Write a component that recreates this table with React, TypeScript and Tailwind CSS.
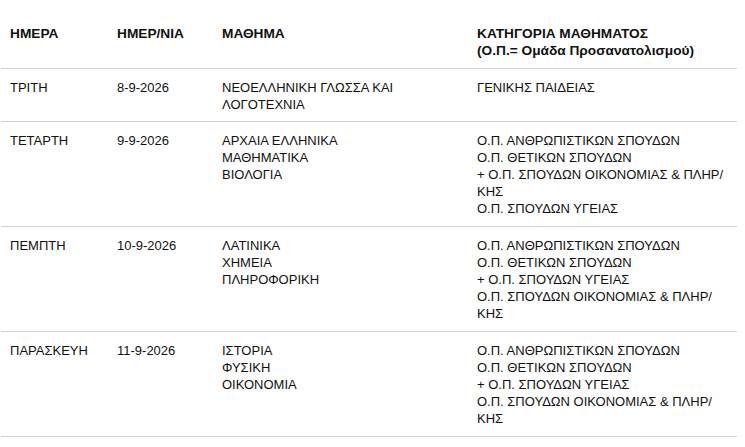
import React from "react";

type Row = { day: string; date: string; subjects: string[]; cats: string[] };

const rows: Row[] = [
  { day: "ΤΡΙΤΗ", date: "8-9-2026", subjects: ["ΝΕΟΕΛΛΗΝΙΚΗ ΓΛΩΣΣΑ ΚΑΙ", "ΛΟΓΟΤΕΧΝΙΑ"], cats: ["ΓΕΝΙΚΗΣ ΠΑΙΔΕΙΑΣ"] },
  {
    day: "ΤΕΤΑΡΤΗ",
    date: "9-9-2026",
    subjects: ["ΑΡΧΑΙΑ ΕΛΛΗΝΙΚΑ", "ΜΑΘΗΜΑΤΙΚΑ", "ΒΙΟΛΟΓΙΑ"],
    cats: ["Ο.Π. ΑΝΘΡΩΠΙΣΤΙΚΩΝ ΣΠΟΥΔΩΝ", "Ο.Π. ΘΕΤΙΚΩΝ ΣΠΟΥΔΩΝ", "+ Ο.Π. ΣΠΟΥΔΩΝ ΟΙΚΟΝΟΜΙΑΣ & ΠΛΗΡ/", "ΚΗΣ", "Ο.Π. ΣΠΟΥΔΩΝ ΥΓΕΙΑΣ"],
  },
  {
    day: "ΠΕΜΠΤΗ",
    date: "10-9-2026",
    subjects: ["ΛΑΤΙΝΙΚΑ", "ΧΗΜΕΙΑ", "ΠΛΗΡΟΦΟΡΙΚΗ"],
    cats: ["Ο.Π. ΑΝΘΡΩΠΙΣΤΙΚΩΝ ΣΠΟΥΔΩΝ", "Ο.Π. ΘΕΤΙΚΩΝ ΣΠΟΥΔΩΝ", "+ Ο.Π. ΣΠΟΥΔΩΝ ΥΓΕΙΑΣ", "Ο.Π. ΣΠΟΥΔΩΝ ΟΙΚΟΝΟΜΙΑΣ & ΠΛΗΡ/", "ΚΗΣ"],
  },
  {
    day: "ΠΑΡΑΣΚΕΥΗ",
    date: "11-9-2026",
    subjects: ["ΙΣΤΟΡΙΑ", "ΦΥΣΙΚΗ", "ΟΙΚΟΝΟΜΙΑ"],
    cats: ["Ο.Π. ΑΝΘΡΩΠΙΣΤΙΚΩΝ ΣΠΟΥΔΩΝ", "Ο.Π. ΘΕΤΙΚΩΝ ΣΠΟΥΔΩΝ", "+ Ο.Π. ΣΠΟΥΔΩΝ ΥΓΕΙΑΣ", "Ο.Π. ΣΠΟΥΔΩΝ ΟΙΚΟΝΟΜΙΑΣ & ΠΛΗΡ/", "ΚΗΣ"],
  },
];

const Lines = ({ items }: { items: string[] }) => (
  <div>
    {items.map((t, i) => (
      <div key={i} className="whitespace-nowrap">{t}</div>
    ))}
  </div>
);

export default function App() {
  return (
    <div
      className="bg-white w-[745px] h-[447px] pt-[14px] pl-[1px] text-[13px] leading-[17px] text-[#111]"
      style={{ fontFamily: '"Liberation Sans", Arial, sans-serif' }}
    >
      <div className="w-[736px]">
        <div className="grid grid-cols-[107px_105px_255px_1fr] border-b border-[#cfcfcf] pt-[11px] pb-[9px] font-bold text-[13.7px]">
          <div className="pl-[9px]">ΗΜΕΡΑ</div>
          <div className="pl-[9px]">ΗΜΕΡ/ΝΙΑ</div>
          <div className="pl-[9px]">ΜΑΘΗΜΑ</div>
          <div className="pl-[9px]">
            <div>ΚΑΤΗΓΟΡΙΑ ΜΑΘΗΜΑΤΟΣ</div>
            <div>(Ο.Π.= Ομάδα Προσανατολισμού)</div>
          </div>
        </div>
        {rows.map((r, i) => (
          <div
            key={i}
            className={
              i === 0
                ? "grid grid-cols-[107px_105px_255px_1fr] border-b border-[#cfcfcf] pt-[10px] pb-[8px]"
                : "grid grid-cols-[107px_105px_255px_1fr] border-b border-[#cfcfcf] pt-[10px] pb-[9px]"
            }
          >
            <div className="pl-[9px]">{r.day}</div>
            <div className="pl-[9px]">{r.date}</div>
            <div className="pl-[9px]"><Lines items={r.subjects} /></div>
            <div className="pl-[9px]"><Lines items={r.cats} /></div>
          </div>
        ))}
      </div>
    </div>
  );
}
